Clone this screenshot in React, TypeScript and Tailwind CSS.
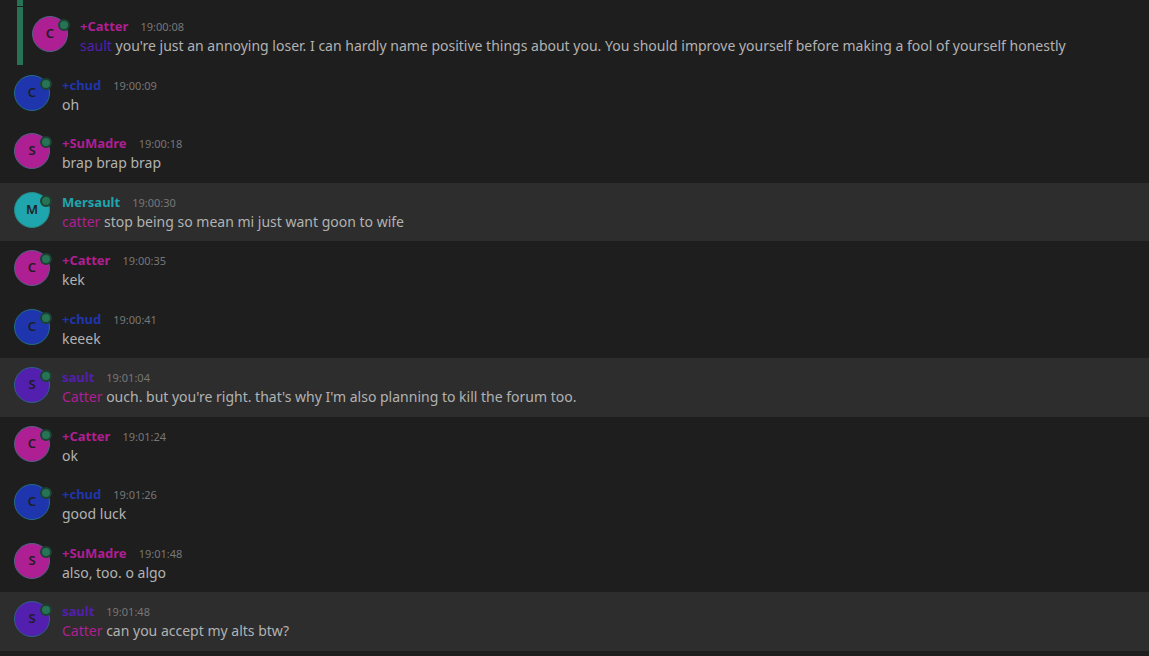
import React from "react";

type Message = {
  id: number;
  author: string;
  tone: keyof typeof tones;
  time: string;
  mention?: { name: string; tone: keyof typeof tones };
  text: string;
  own?: boolean;
};

const tones = {
  magenta: { text: "text-[#ae1f93]", bg: "bg-[#ae1f93]", ring: "border-[#4f6284]" },
  blue: { text: "text-[#1f35ae]", bg: "bg-[#1f35ae]", ring: "border-[#236d83]" },
  teal: { text: "text-[#1fa5ae]", bg: "bg-[#1fa5ae]", ring: "border-[#258a83]" },
  purple: { text: "text-[#531fae]", bg: "bg-[#531fae]", ring: "border-[#2c6288]" },
};

const quoted: Message = {
  id: 1,
  author: "+Catter",
  tone: "magenta",
  time: "19:00:08",
  mention: { name: "sault", tone: "purple" },
  text: "you're just an annoying loser. I can hardly name positive things about you. You should improve yourself before making a fool of yourself honestly",
};

const messages: Message[] = [
  { id: 2, author: "+chud", tone: "blue", time: "19:00:09", text: "oh" },
  { id: 3, author: "+SuMadre", tone: "magenta", time: "19:00:18", text: "brap brap brap" },
  { id: 4, author: "Mersault", tone: "teal", time: "19:00:30", mention: { name: "catter", tone: "magenta" }, text: "stop being so mean mi just want goon to wife", own: true },
  { id: 5, author: "+Catter", tone: "magenta", time: "19:00:35", text: "kek" },
  { id: 6, author: "+chud", tone: "blue", time: "19:00:41", text: "keeek" },
  { id: 7, author: "sault", tone: "purple", time: "19:01:04", mention: { name: "Catter", tone: "magenta" }, text: "ouch. but you're right. that's why I'm also planning to kill the forum too.", own: true },
  { id: 8, author: "+Catter", tone: "magenta", time: "19:01:24", text: "ok" },
  { id: 9, author: "+chud", tone: "blue", time: "19:01:26", text: "good luck" },
  { id: 10, author: "+SuMadre", tone: "magenta", time: "19:01:48", text: "also, too. o algo" },
  { id: 11, author: "sault", tone: "purple", time: "19:01:48", mention: { name: "Catter", tone: "magenta" }, text: "can you accept my alts btw?", own: true },
];

function Avatar({ author, tone }: { author: string; tone: keyof typeof tones }) {
  const initial = author.replace("+", "").charAt(0).toUpperCase();

  return (
    <div
      className={`relative flex size-9 shrink-0 items-center justify-center rounded-full border text-[13px] font-semibold text-[#1e1e1e] ${tones[tone].bg} ${tones[tone].ring}`}
    >
      {initial}
      {/* Online status */}
      <span className="absolute top-0.5 -right-[3px] size-3 rounded-full border-2 border-[#1c4232] bg-[#267356]" />
    </div>
  );
}

function MessageBody({ message }: { message: Message }) {
  return (
    <div className="flex gap-3">
      <Avatar author={message.author} tone={message.tone} />
      <div className="min-w-0">
        <div className="flex h-5 items-baseline gap-3 leading-5">
          <span className={`text-[13px] font-bold ${tones[message.tone].text}`}>{message.author}</span>
          <time className="text-[11px] text-[#777777]">{message.time}</time>
        </div>
        <p className="text-sm leading-5 text-[#b2b2b2]">
          {message.mention && (
            <>
              <span className={tones[message.mention.tone].text}>{message.mention.name}</span>{" "}
            </>
          )}
          {message.text}
        </p>
      </div>
    </div>
  );
}

export default function App() {
  return (
    <main className="min-h-screen overflow-hidden bg-[#1e1e1e] font-['Noto_Sans',sans-serif]">
      {/* Quoted thread */}
      <div className="flex flex-col gap-px pb-px pl-[17px]">
        <div className="h-1.5 border-l-6 border-[#267356]" />
        <div className="border-l-6 border-[#267356] py-[9px] pl-[9px]">
          <MessageBody message={quoted} />
        </div>
      </div>

      <ul>
        {messages.map((message) => (
          <li
            key={message.id}
            className={`px-3.5 py-[9px] even:pb-2.5 ${message.own ? "bg-[#2d2d2d]" : ""}`}
          >
            <MessageBody message={message} />
          </li>
        ))}
      </ul>
    </main>
  );
}
